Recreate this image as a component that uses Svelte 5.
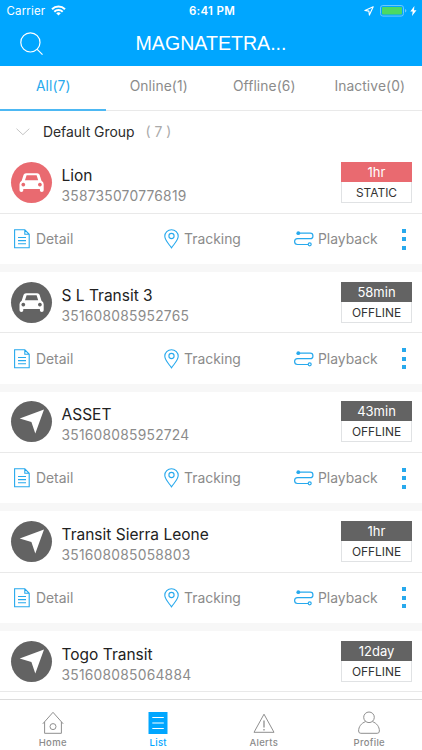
<script>
  const tabs = [
    { label: 'All(7)', active: true },
    { label: 'Online(1)' },
    { label: 'Offline(6)' },
    { label: 'Inactive(0)' }
  ];
  const devices = [
    { name: 'Lion', imei: '358735070776819', icon: 'car', time: '1hr', status: 'STATIC', alarm: true },
    { name: 'S L Transit 3', imei: '351608085952765', icon: 'car', time: '58min', status: 'OFFLINE' },
    { name: 'ASSET', imei: '351608085952724', icon: 'arrow', time: '43min', status: 'OFFLINE' },
    { name: 'Transit Sierra Leone', imei: '351608085058803', icon: 'arrow', time: '1hr', status: 'OFFLINE' },
    { name: 'Togo Transit', imei: '351608085064884', icon: 'arrow', time: '12day', status: 'OFFLINE', collapsed: true }
  ];
</script>

<div class="screen">
  <header>
    <div class="status">
      <div class="left">
        <span>Carrier</span>
        <svg width="15" height="11" viewBox="0 0 15 11" fill="none" stroke="#fff" stroke-width="2">
          <path d="M1 4.2a9.2 9.2 0 0 1 13 0M3.3 6.7a6 6 0 0 1 8.4 0" />
          <path d="M7.5 10.6 5.2 8.3a3.3 3.3 0 0 1 4.6 0z" fill="#fff" stroke="none" />
        </svg>
      </div>
      <div class="clock">6:41 PM</div>
      <div class="right">
        <svg width="10" height="10" viewBox="0 0 10 10" fill="none" stroke="#fff" stroke-width="1.1" stroke-linejoin="round">
          <path d="M9.2.8.9 4.5l4 .6.5 4z" />
        </svg>
        <svg width="27" height="12" viewBox="0 0 27 12">
          <rect x=".5" y=".5" width="23" height="10.6" rx="2.4" fill="none" stroke="#6cc8ff" />
          <rect x="2" y="2" width="20" height="7.6" rx="1" fill="#4cd964" />
          <path d="M25 4v3.6q1.4-.5 1.4-1.8T25 4z" fill="#6cc8ff" />
        </svg>
        <svg width="7" height="10" viewBox="0 0 7 10"><path d="M4.4 0 .3 5.4h2.4L2 10l4.5-5.8H4z" fill="#fff" /></svg>
      </div>
    </div>
    <div class="bar">
      <svg class="search" width="24" height="24" viewBox="0 0 24 24" fill="none" stroke="#fff" stroke-width="1.2">
        <circle cx="10.4" cy="10.4" r="9.6" /><path d="m17.2 17.4 5.3 5.2" />
      </svg>
      <h1>MAGNATETRA...</h1>
    </div>
  </header>

  <nav class="tabs">
    {#each tabs as tab}
      <div class="tab" class:active={tab.active}><span>{tab.label}</span></div>
    {/each}
  </nav>

  <main>
    <div class="group">
      <svg width="14" height="8" viewBox="0 0 14 8" fill="none" stroke="#c4c4c4" stroke-width="1"><path d="m.5.7 6.4 6L13.3.7" /></svg>
      <span class="gname">Default Group</span>
      <span class="gcount">( 7 )</span>
    </div>

    {#each devices as d}
      <section class="card" class:alarm={d.alarm}>
        <div class="info">
          <div class="avatar">
            {#if d.icon === 'car'}
              <svg width="41" height="41" viewBox="0 0 41 41">
                <path fill="#fff" fill-rule="evenodd" d="M15 11.2h11.2q1.9 0 2.4 1.5l1.9 6.1q2.2 1.2 2.2 3.5v6q0 1.8-1.9 1.8t-1.9-1.8v-1.2H12.3v1.2q0 1.8-1.9 1.8t-1.9-1.8v-6q0-2.3 2.2-3.5l1.9-6.1q.5-1.5 2.4-1.5zm.6 2.1-1.6 5h13.2l-1.6-5zM12.3 20.7a1.9 1.9 0 1 0 .01 0zm16.6 0a1.9 1.9 0 1 0 .01 0z" />
              </svg>
            {:else}
              <svg width="41" height="41" viewBox="0 0 41 41"><path fill="#fff" d="M33 8.6 8.7 17.5l11.7 3.6 3.9 11.4z" /></svg>
            {/if}
          </div>
          <div class="names">
            <div class="name">{d.name}</div>
            <div class="imei">{d.imei}</div>
          </div>
          <div class="badge">
            <div class="time">{d.time}</div>
            <div class="state">{d.status}</div>
          </div>
        </div>
        {#if !d.collapsed}
          <div class="actions">
            <div class="action detail">
              <svg width="16" height="20" viewBox="0 0 16 20" fill="none" stroke="#27a9ed" stroke-width="1.1">
                <path d="M.6.8h10.2l4.4 4.5v13.5H.6zM10.8.8v4.5h4.4M4 8.5h8M4 11.6h8M4 14.7h8" />
              </svg>
              <span>Detail</span>
            </div>
            <div class="action tracking">
              <svg width="15" height="20" viewBox="0 0 15 20" fill="none" stroke="#27a9ed" stroke-width="1.1">
                <path d="M7.5 18.8C4.2 14.3.8 11 .8 7.3a6.7 6.5 0 0 1 13.4 0c0 3.7-3.4 7-6.7 11.5z" /><circle cx="7.5" cy="7" r="2.6" />
              </svg>
              <span>Tracking</span>
            </div>
            <div class="action playback">
              <svg width="20" height="16" viewBox="0 0 20 16" fill="none" stroke="#27a9ed" stroke-width="1.2">
                <path d="M4 2.2h12.2a2.7 2.7 0 0 1 0 5.5H3.5a2.9 2.9 0 0 0 0 5.8H14" />
                <circle cx="4.3" cy="2.2" r="1.9" fill="#27a9ed" stroke="none" /><circle cx="15.7" cy="13.3" r="1.5" />
              </svg>
              <span>Playback</span>
            </div>
            <div class="more"><i></i><i></i><i></i></div>
          </div>
          <div class="gap"></div>
        {/if}
      </section>
    {/each}
  </main>

  <footer>
    <div class="item">
      <svg width="22" height="24" viewBox="0 0 22 24" fill="none" stroke="#8f8f8f" stroke-width="1">
        <path d="M.8 12.8 11 1.3l10.2 11.5M2.6 10.9v11.4h16.8V10.9" /><circle cx="11" cy="15.6" r="3" />
      </svg>
      <span>Home</span>
    </div>
    <div class="item on">
      <svg width="22" height="24" viewBox="0 0 22 24"><path fill="#00a6ff" d="M1.5 1h19v22h-19z" /><path stroke="#fff" stroke-width="1" d="M5.3 6.5h11.5M5.3 12h11.5M5.3 17.5h11.5" /></svg>
      <span>List</span>
    </div>
    <div class="item">
      <svg width="22" height="24" viewBox="0 0 22 24" fill="none" stroke="#8f8f8f" stroke-width="1">
        <path d="M11 3.2 21 21.3H1z" /><path d="M11 9.5v7M11 18v1.6" stroke-width="1.3" />
      </svg>
      <span>Alerts</span>
    </div>
    <div class="item">
      <svg width="22" height="24" viewBox="0 0 22 24" fill="none" stroke="#8f8f8f" stroke-width="1">
        <circle cx="11" cy="6.3" r="5.3" /><path d="M7.6 10.6C3.2 12.2.6 15.8.6 20q0 2.3 2.2 2.3h16.4q2.2 0 2.2-2.3c0-4.2-2.6-7.8-7-9.4" />
      </svg>
      <span>Profile</span>
    </div>
  </footer>
</div>

<style>
  .screen { width: 422px; height: 750px; display: flex; flex-direction: column; overflow: hidden; background: #fff; font-family: Inter, "Liberation Sans", sans-serif; color: #8b8b8b; }
  svg { display: block; flex: none; }
  header { flex: none; height: 65.6px; background: #00a6ff; color: #fff; }
  .status { height: 22px; display: grid; grid-template-columns: 1fr auto 1fr; align-items: center; font-size: 11.5px; line-height: 22px; }
  .left { display: flex; align-items: center; gap: 6px; padding-left: 6.5px; letter-spacing: .15px; }
  .left svg { margin-top: -2px; }
  .clock { font-weight: 600; letter-spacing: .3px; padding-left: 2px; }
  .right { display: flex; justify-content: flex-end; align-items: center; padding-right: 5px; }
  .right svg:nth-child(2) { margin: 0 3px 0 6px; }
  .bar { height: 43px; display: grid; grid-template-columns: 60px 1fr 60px; align-items: center; }
  .search { margin-left: 20px; }
  h1 { margin: 0; text-align: center; font: 400 19.6px/43px "Liberation Sans", Arial, sans-serif; }
  .tabs { flex: none; height: 45.6px; box-sizing: border-box; display: grid; grid-template-columns: repeat(4, 1fr); }
  .tab { box-sizing: border-box; border-bottom: 1px solid #e9e9e9; padding-left: 1px; text-align: center; font-size: 13.8px; line-height: 41px; letter-spacing: .1px; }
  .active { color: #27a9ed; border-bottom: 2px solid #4db8f3; }
  main { flex: 1; min-height: 0; overflow: hidden; }
  .group { height: 41.2px; display: flex; align-items: center; padding-left: 16px; font-size: 13.9px; }
  .gname { color: #2b2b2b; margin-left: 13px; }
  .gcount { color: #aaa; margin-left: 11px; }
  .card { height: 119.6px; display: flex; flex-direction: column; }
  .card:last-child { height: auto; }
  .gap { height: 7.8px; background: #f7f7f7; }
  .info { height: 61.5px; box-sizing: border-box; border-bottom: 1px solid #e9e9e9; display: flex; align-items: center; padding: 0 10px 0 10.5px; }
  .avatar { width: 41px; height: 41px; border-radius: 50%; background: #636363; }
  .alarm .avatar { background: #e96a70; }
  .names { flex: 1; margin-left: 10px; }
  .name { color: #222; font-size: 15.5px; line-height: 20px; margin-top: 7px; }
  .imei { font-size: 13.8px; line-height: 20px; letter-spacing: .25px; }
  .badge { width: 71px; height: 41px; box-sizing: border-box; border: 1px solid #e0e2e4; text-align: center; }
  .time { height: 20px; margin: -1px -1px 0; background: #636363; color: #fff; font-size: 13px; line-height: 21px; }
  .alarm .time { background: #e96a70; }
  .state { color: #333; font-size: 11.9px; line-height: 22px; }
  .actions { height: 50.3px; display: flex; align-items: center; font-size: 13.9px; }
  .action { display: flex; align-items: center; }
  .detail { width: 150px; padding-left: 14px; gap: 6px; }
  .tracking { width: 130px; gap: 5px; }
  .playback { width: 108px; gap: 4px; }
  .more { height: 21px; display: flex; flex-direction: column; justify-content: space-between; }
  .more i { width: 4px; height: 4px; background: #27a9ed; }
  footer { flex: none; height: 51px; box-sizing: border-box; border-top: 1px solid #dcdcdc; background: #fff; display: grid; grid-template-columns: repeat(4, 1fr); }
  .item { display: flex; flex-direction: column; align-items: center; padding-top: 11px; font-size: 9.5px; line-height: 13px; font-weight: 500; letter-spacing: .3px; }
  .item span { margin-top: 1px; }
  .on { color: #00a6ff; }
</style>
